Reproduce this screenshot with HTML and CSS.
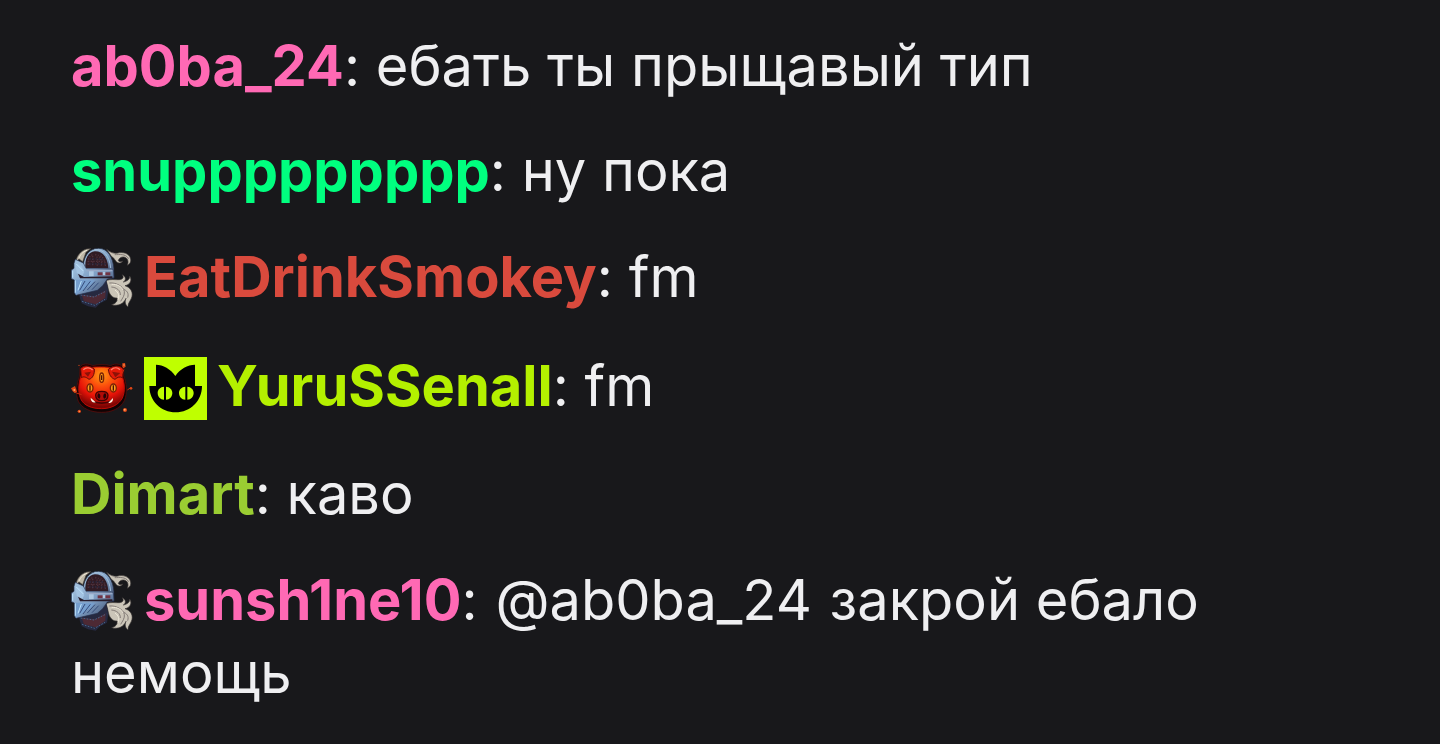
FILE: index.html
```html
<!DOCTYPE html>
<html lang="ru">
<head>
  <meta charset="UTF-8">
  <title>Chat</title>
  <link rel="stylesheet" href="styles.css">
</head>
<body>

  <!-- badge shapes, reused below -->
  <svg class="defs" aria-hidden="true">
    <defs>
      <linearGradient id="steel" x1="0" y1="0" x2="1" y2="1">
        <stop offset="0" stop-color="#a9c8e4"/>
        <stop offset="0.5" stop-color="#7f9fc4"/>
        <stop offset="1" stop-color="#34405f"/>
      </linearGradient>
      <radialGradient id="lava" cx="0.5" cy="0.2" r="0.75">
        <stop offset="0" stop-color="#ff9a12"/>
        <stop offset="0.35" stop-color="#fb4f0c"/>
        <stop offset="0.7" stop-color="#e51208"/>
        <stop offset="1" stop-color="#7c0503"/>
      </radialGradient>
    </defs>
    <symbol id="knight" viewBox="33 24 189 189">
      <path fill="#c9c3b6" stroke="#3a3535" stroke-width="2" d="M140 28C150 36 160 42 174 39C188 35 207 40 211 54C214 64 211 72 202 76C207 64 203 53 192 51C184 50 177 54 175 62C178 66 184 66 188 63C184 71 173 71 168 64C163 57 160 52 154 49Z"/>
      <path fill="#cbc5b8" stroke="#3a3535" stroke-width="2" d="M138 122C151 116 166 120 178 119C188 118 193 112 187 104C198 110 199 120 190 126C203 123 210 117 209 108C218 121 209 135 195 137C210 142 219 153 216 169C214 181 203 188 204 201C195 194 194 184 198 175C192 190 176 200 155 194C165 192 174 184 171 174C162 175 153 169 148 158C144 148 144 138 138 122Z"/>
      <path fill="none" stroke="#827a76" stroke-width="3" d="M148 129C168 127 190 139 193 154C195 166 187 175 182 184M154 141C169 142 182 151 181 165M186 146C202 151 207 160 203 173M164 44C178 44 196 40 206 56"/>
      <path fill="none" stroke="#f0eadb" stroke-width="3" d="M155 133C171 132 184 139 189 150M165 150C176 157 179 169 174 179"/>
      <path fill="#262940" d="M62 148L58 168L65 190L84 199L107 203L121 190L141 179L145 153L138 116L92 122Z"/>
      <path fill="#4d2934" d="M65 164L105 169L137 151L136 173L108 193L72 184Z"/>
      <path fill="none" stroke="#46658c" stroke-width="3" stroke-dasharray="5 4" d="M62 165L102 171L139 153M66 184L104 196L135 178"/>
      <path fill="url(#steel)" stroke="#1e2438" stroke-width="2" d="M70 75C72 48 88 25 116 25C143 25 159 52 162 86L162 115L77 117Z"/>
      <path fill="#301b24" d="M76 84C74 55 85 36 104 34C129 33 143 52 145 85Z"/>
      <path fill="none" stroke="#4f303a" stroke-width="4" stroke-dasharray="4 4" d="M85 75C82 57 88 47 101 43M98 76L98 48M111 77C116 63 112 49 106 43M124 77C127 66 121 51 114 45M136 78C136 62 129 52 122 47M84 64H134"/>
      <path fill="none" stroke="#263f66" stroke-width="3" stroke-dasharray="3 6" d="M89 57H130M88 72H137"/>
      <path fill="none" stroke="#a5bfd9" stroke-width="3" d="M103 29C132 27 148 47 152 84"/>
      <path fill="#bfb8a8" stroke="#4b4642" stroke-width="2" d="M48 66C49 49 62 32 80 27L92 26L78 37L68 65L57 57Z"/>
      <path fill="none" stroke="#f0e8d6" stroke-width="3" d="M57 54C62 44 67 36 81 31"/>
      <path fill="url(#steel)" stroke="#26304d" stroke-width="2" d="M46 58L70 69L79 86L160 88L162 113L142 117L128 137L112 151L48 166L43 158L43 120L34 116V90L42 85V70Z"/>
      <path fill="#a3c3e2" d="M46 70L65 77L73 96L65 111L50 97Z"/>
      <path fill="#769fce" d="M45 119L105 121L92 134L64 153L47 164Z"/>
      <path fill="#281c2b" d="M54 101L72 111L157 109V115H60Z"/>
      <path fill="#99a9c7" d="M80 89H157V94H80Z"/>
      <path fill="#713343" d="M113 97H151V106H113Z"/>
      <path fill="#adc7e1" d="M87 94H101V108H87ZM128 95H136V106H128Z"/>
      <path fill="none" stroke="#364d7c" stroke-width="3" d="M59 151L75 123M69 153L91 124M82 150L105 125M96 149L116 128"/>
      <path fill="none" stroke="#bce2fb" stroke-width="3" d="M46 121V158M64 123L54 151M38 93V113M49 72L70 93"/>
    </symbol>
    <symbol id="pig" viewBox="33 18 189 189">
      <path fill="#100304" stroke="#6b0b07" stroke-width="2" d="M60 48C67 36 86 38 98 44C114 40 139 40 152 44C165 36 185 38 191 52L191 75C199 94 203 127 193 149C181 173 154 184 125 184C93 184 66 173 55 151C46 129 50 98 59 76Z"/>
      <path fill="url(#lava)" stroke="#bd0b05" stroke-width="3" d="M68 62C83 47 105 48 124 48C147 48 169 49 183 66C194 91 197 120 187 141C176 162 152 173 125 173C96 173 71 164 62 143C52 119 56 88 68 62Z"/>
      <path fill="#e51b09" stroke="#640a07" stroke-width="3" d="M64 80L62 53C70 41 90 43 103 54C104 70 98 82 87 85C77 77 70 76 64 80ZM145 55C158 43 179 41 190 54L188 80C179 76 173 78 165 85C153 81 147 71 145 55Z"/>
      <path fill="none" stroke="#ff806a" stroke-width="4" d="M70 56C78 48 91 50 98 57M153 57C162 48 173 49 180 56"/>
      <path fill="#8c1207" d="M73 65L93 62L84 77ZM156 62L181 66L166 79Z"/>
      <g fill="#ff9e1b" stroke="#7a2205" stroke-width="4">
        <ellipse cx="125" cy="80" rx="6" ry="14"/>
        <ellipse cx="90" cy="111" rx="9" ry="12"/>
        <ellipse cx="160" cy="111" rx="9" ry="12"/>
      </g>
      <path stroke="#481006" stroke-width="4" d="M125 73V87M90 103V119M160 103V119"/>
      <path fill="#b00c09" stroke="#3e0303" stroke-width="4" d="M107 132C108 121 118 121 125 121C134 121 143 122 144 132C144 144 137 149 125 149C113 149 107 143 107 132Z"/>
      <path fill="#240306" d="M115 127C122 127 123 141 118 143C111 142 111 132 115 127ZM136 127C129 127 128 141 133 143C140 142 140 132 136 127Z"/>
      <path fill="none" stroke="#480404" stroke-width="5" d="M95 151C111 158 139 158 155 151"/>
      <path fill="#fff0e0" d="M92 140L107 154C98 157 92 151 92 140ZM159 141L145 155C154 158 160 151 159 141Z"/>
      <path fill="none" stroke="#c62b0b" stroke-width="3" d="M49 126L65 131M192 56L184 70M202 117L211 111"/>
      <g fill="#df4616">
        <path d="M33 112L45 105L51 122L45 127L38 121Z"/>
        <path d="M187 37L195 36L197 47L190 52L187 47Z"/>
        <circle cx="58" cy="181" r="5"/>
        <circle cx="195" cy="177" r="6"/>
        <circle cx="213" cy="112" r="4"/>
        <circle cx="57" cy="43" r="2"/>
      </g>
      <g fill="#ffad62">
        <circle cx="43" cy="117" r="3"/>
        <circle cx="192" cy="42" r="2"/>
        <circle cx="194" cy="176" r="3"/>
        <circle cx="58" cy="181" r="2"/>
      </g>
    </symbol>
    <symbol id="cat" viewBox="27 18 189 189">
      <path fill="#bfff00" d="M27 18H216V207H27Z"/>
      <path d="M63 41C84 41 107 54 121 75C135 54 158 41 180 41V105H201C201 150 166 184 122 184C78 184 43 150 43 105H63Z"/>
      <path fill="#bfff00" d="M87 107C76 107 68 116 68 126C68 137 76 146 87 146ZM93 107V146C104 146 112 137 112 126C112 116 104 107 93 107ZM151 107C140 107 132 116 132 126C132 137 140 146 151 146ZM157 107V146C168 146 176 137 176 126C176 116 168 107 157 107Z"/>
    </symbol>
  </svg>

  <div class="chat">
    <div class="message"><span class="nick pink">ab0ba_24</span>: ебать ты прыщавый тип</div>
    <div class="message"><span class="nick spring">snuppppppppp</span>: ну пока</div>
    <div class="message"><svg class="badge"><use href="#knight"/></svg><span class="nick red">EatDrinkSmokey</span>: fm</div>
    <div class="message"><svg class="badge"><use href="#pig"/></svg><svg class="badge"><use href="#cat"/></svg><span class="nick lime">YuruSSenall</span>: fm</div>
    <div class="message"><span class="nick olive">Dimart</span>: каво</div>
    <div class="message"><svg class="badge"><use href="#knight"/></svg><span class="nick pink">sunsh1ne10</span>: <span class="mention">@ab0ba_24</span> закрой ебало немощь</div>
  </div>

</body>
</html>
```

FILE: styles.css
```css
body {
  margin: 0;
  background: #18181b;
  color: #efeff1;
  font-family: Inter, sans-serif;
  font-size: 56px;
  font-optical-sizing: none;
  line-height: 70px;
}
.defs {
  position: absolute;
  width: 0;
  height: 0;
}
.chat {
  padding: 14px 71px;
}
.message {
  padding: 17px 0 18px;
}
.nick {
  font-weight: 700;
}
.mention {
  padding: 0 2px;
}
.pink {
  color: #ff69b4;
}
.spring {
  color: #00ff7f;
}
.red {
  color: #d94a3d;
}
.lime {
  color: #b4f000;
}
.olive {
  color: #9acd32;
}
.badge {
  width: 63px;
  height: 63px;
  margin: 7px 10px 4px 0;
  vertical-align: -18px;
}
```
